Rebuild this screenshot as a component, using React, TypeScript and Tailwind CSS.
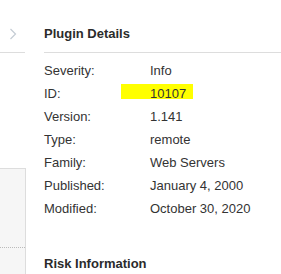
import React from "react";

const rows: [string, string][] = [
  ["Severity:", "Info"],
  ["ID:", "10107"],
  ["Version:", "1.141"],
  ["Type:", "remote"],
  ["Family:", "Web Servers"],
  ["Published:", "January 4, 2000"],
  ["Modified:", "October 30, 2020"],
];

export default function App() {
  return (
    <div
      className="flex w-[281px] h-[274px] overflow-hidden bg-white text-[#333333]"
      style={{ fontFamily: '"Liberation Sans", Arial, sans-serif' }}
    >
      <div className="w-[26px] flex flex-col shrink-0">
        <div className="h-[53px] w-[25px] border-b border-[#dddddd] pt-[28px] pl-[9px]">
          <svg width="8" height="12" viewBox="0 0 8 12" fill="none">
            <path d="M1.5 1 L6.5 6 L1.5 11" stroke="#c4ccd4" strokeWidth="1.2" />
          </svg>
        </div>
        <div className="h-[115px]" />
        <div className="flex-1 bg-[#f6f6f6] border-t border-r border-[#dddddd] pt-[78px]">
          <div className="border-t border-dotted border-[#bbbbbb]" />
        </div>
      </div>
      <div className="ml-[18px] flex-1 flex flex-col">
        <div className="h-[53px] border-b border-[#dddddd] pt-[26px]">
          <div className="text-[13px] leading-[15px] font-bold text-[#2b2b2b]">Plugin Details</div>
        </div>
        <div className="pt-[6px]">
          {rows.map(([label, value]) => (
            <div key={label} className="flex h-[23px] text-[13px] leading-[23px]">
              <div className="w-[106px] shrink-0">{label}</div>
              <div className="relative">
                {label === "ID:" && (
                  <span className="absolute left-[-29px] top-[2px] w-[72px] h-[15px] bg-[#ffff00]" />
                )}
                <span className="relative">{value}</span>
              </div>
            </div>
          ))}
        </div>
        <div className="mt-[36px] text-[13px] leading-[15px] font-bold text-[#2b2b2b]">Risk Information</div>
      </div>
    </div>
  );
}
